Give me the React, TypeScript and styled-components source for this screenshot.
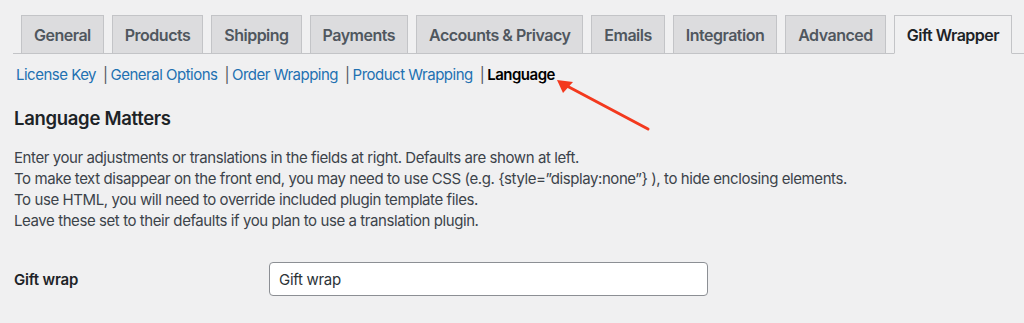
import React from "react";
import styled, { createGlobalStyle } from "styled-components";

const Global = createGlobalStyle`
  html, body { margin: 0; padding: 0; background: #f0f0f1; }
  body { font-family: Inter, "Open Sans", "Liberation Sans", sans-serif; color: #3c434a; }
`;

const Page = styled.div`
  position: relative;
  width: 1024px;
  height: 323px;
  overflow: hidden;
  background: #f0f0f1;
  padding: 15px 0 0 13px;
  box-sizing: border-box;
`;

const TabNav = styled.nav`
  display: flex;
  gap: 8px;
  padding-left: 8px;
  border-bottom: 1px solid #c3c4c7;
  height: 39px;
  box-sizing: border-box;
`;

const Tab = styled.a<{ $active?: boolean }>`
  display: flex;
  align-items: center;
  height: ${(p) => (p.$active ? "39px" : "38px")};
  box-sizing: border-box;
  padding: 1px 12px 0;
  border: 1px solid #c3c4c7;
  border-bottom: ${(p) => (p.$active ? "1px solid #f0f0f1" : "none")};
  background: ${(p) => (p.$active ? "#f0f0f1" : "#dcdcde")};
  color: ${(p) => (p.$active ? "#1d2327" : "#50575e")};
  font-size: 16px;
  font-weight: 600;
  letter-spacing: -0.5px;
  text-decoration: none;
  white-space: nowrap;
`;

const SubNav = styled.ul`
  display: flex;
  list-style: none;
  margin: 11px 0 0 3px;
  padding: 0;
  font-size: 15px;
  line-height: 20px;
  letter-spacing: -0.5px;
`;

const SubItem = styled.li`
  display: flex;
  color: #50575e;
`;

const Sep = styled.span`
  margin: 0 3px 0 7px;
  color: #50575e;
`;

const SubLink = styled.a<{ $current?: boolean }>`
  color: ${(p) => (p.$current ? "#000" : "#2271b1")};
  font-weight: ${(p) => (p.$current ? 600 : 400)};
  text-decoration: none;
`;

const Heading = styled.h2`
  margin: 21px 0 0 1px;
  font-size: 18.5px;
  font-weight: 600;
  line-height: 24px;
  letter-spacing: -0.3px;
  color: #1d2327;
`;

const Intro = styled.p`
  margin: 17px 0 0 1px;
  font-size: 15px;
  line-height: 21px;
  letter-spacing: -0.42px;
  color: #3c434a;
`;

const FormRow = styled.div`
  display: grid;
  grid-template-columns: 256px 439px;
  align-items: center;
  margin-top: 31px;
`;

const Label = styled.label`
  padding-left: 1px;
  font-size: 15px;
  font-weight: 600;
  letter-spacing: -0.2px;
  color: #1d2327;
`;

const Input = styled.input`
  height: 34px;
  box-sizing: border-box;
  border: 1px solid #8c8f94;
  border-radius: 4px;
  background: #fff;
  padding: 0 9px;
  font-family: inherit;
  font-size: 15px;
  letter-spacing: -0.3px;
  color: #2c3338;
`;

const Arrow = styled.svg`
  position: absolute;
  left: 550px;
  top: 72px;
`;

const tabs = [
  "General",
  "Products",
  "Shipping",
  "Payments",
  "Accounts & Privacy",
  "Emails",
  "Integration",
  "Advanced",
  "Gift Wrapper",
];

const subs = ["License Key", "General Options", "Order Wrapping", "Product Wrapping", "Language"];

export default function App() {
  return (
    <>
      <Global />
      <Page>
        <TabNav>
          {tabs.map((t) => (
            <Tab key={t} $active={t === "Gift Wrapper"}>
              {t}
            </Tab>
          ))}
        </TabNav>
        <SubNav>
          {subs.map((s, i) => (
            <SubItem key={s}>
              {i > 0 && <Sep>|</Sep>}
              <SubLink $current={s === "Language"}>{s}</SubLink>
            </SubItem>
          ))}
        </SubNav>
        <Heading>Language Matters</Heading>
        <Intro>
          Enter your adjustments or translations in the fields at right. Defaults are shown at left.
          <br />
          To make text disappear on the front end, you may need to use CSS (e.g. {"{style=”display:none”}"} ), to hide enclosing elements.
          <br />
          To use HTML, you will need to override included plugin template files.
          <br />
          Leave these set to their defaults if you plan to use a translation plugin.
        </Intro>
        <FormRow>
          <Label>Gift wrap</Label>
          <Input defaultValue="Gift wrap" />
        </FormRow>
        <Arrow width="110" height="70" viewBox="0 0 110 70">
          <line x1="98" y1="57" x2="17" y2="14" stroke="#f3391e" strokeWidth="3" strokeLinecap="round" />
          <polygon points="7,8 23,10 13,21" fill="#f3391e" />
        </Arrow>
      </Page>
    </>
  );
}
